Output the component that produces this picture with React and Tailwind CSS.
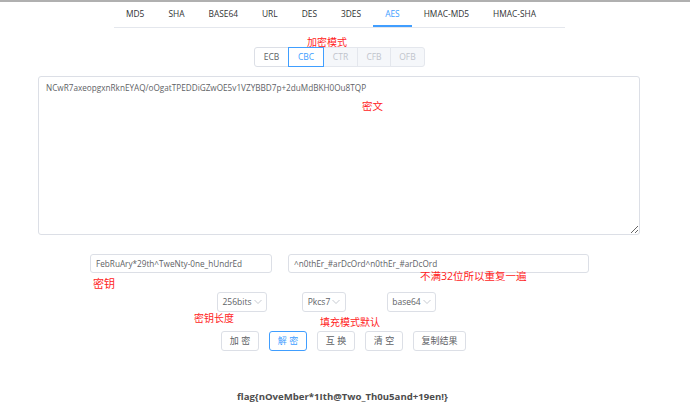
const TABS = ['MD5', 'SHA', 'BASE64', 'URL', 'DES', '3DES', 'AES', 'HMAC-MD5', 'HMAC-SHA']
const MODES = [
  { name: 'ECB', w: 'w-[35px]' },
  { name: 'CBC', w: 'w-[36px]', active: true },
  { name: 'CTR', w: 'w-[35px]', off: true },
  { name: 'CFB', w: 'w-[34px]', off: true },
  { name: 'OFB', w: 'w-[35px]', off: true },
]
const ACTIONS = ['加 密', '解 密', '互 换', '清 空', '复制结果']

function Chevron() {
  return (
    <svg width="8" height="6" viewBox="0 0 8 6" className="ml-[2px]">
      <polyline points="0.5,1 4,4.5 7.5,1" fill="none" stroke="#c0c4cc" strokeWidth="0.9" />
    </svg>
  )
}

function Select({ label, w, ml }) {
  return (
    <div className={`${w} ${ml} h-[20px] flex items-center justify-center rounded-[3px] border border-[#dcdfe6] text-[8.5px] text-[#606266]`}>
      {label}
      <Chevron />
    </div>
  )
}

function Note({ className, children }) {
  return (
    <span className={`absolute leading-none text-[#ff1c1c] whitespace-nowrap ${className}`}>{children}</span>
  )
}

export default function App() {
  return (
    <div className="relative w-[690px] h-[410px] overflow-hidden bg-white border-t-2 border-[#b0b0b0] font-['Open_Sans','Noto_Sans_CJK_SC',sans-serif] text-[#606266]">
      <div className="ml-[114px] w-[451px] h-[26px] flex border-b border-[#e4e7ed] text-[8.4px] text-[#303133]">
        {TABS.map((t) => (
          <div
            key={t}
            className={`px-3 h-full flex items-center ${t === 'AES' ? 'text-[#409eff] border-b-2 border-[#409eff] -mb-px pt-[2px]' : ''}`}
          >
            {t}
          </div>
        ))}
      </div>

      <div className="mt-[19px] ml-[254px] flex h-[20px] text-[8.5px]">
        {MODES.map((m, i) => (
          <div
            key={m.name}
            className={`${m.w} h-full flex items-center justify-center border ${i ? '-ml-px' : ''} ${
              i === 0 ? 'rounded-l-[3px]' : ''
            } ${i === MODES.length - 1 ? 'rounded-r-[3px]' : ''} ${
              m.active
                ? 'relative z-10 border-[#409eff] text-[#409eff] bg-white'
                : m.off
                  ? 'border-[#e4e7ed] bg-[#f5f7fa] text-[#c0c4cc]'
                  : 'border-[#dcdfe6] text-[#606266]'
            }`}
          >
            {m.name}
          </div>
        ))}
      </div>

      <textarea
        readOnly
        value="NCwR7axeopgxnRknEYAQ/oOgatTPEDDiGZwOE5v1VZYBBD7p+2duMdBKH0Ou8TQP"
        className="block mt-[9px] ml-[38px] w-[602px] h-[159px] rounded-[3px] border border-[#dcdfe6] pl-[7px] pt-[4px] text-[8.2px] leading-[13px] text-[#606266] outline-none"
      />

      <div className="mt-[19px] ml-[90px] flex gap-[16px]">
        <input
          readOnly
          value="FebRuAry*29th^TweNty-0ne_hUndrEd"
          className="w-[182px] h-[19px] rounded-[3px] border border-[#dcdfe6] px-[5px] text-[8.2px] text-[#606266] outline-none"
        />
        <input
          readOnly
          value="^n0thEr_#arDcOrd^n0thEr_#arDcOrd"
          className="w-[301px] h-[19px] rounded-[3px] border border-[#dcdfe6] px-[5px] text-[8.2px] text-[#606266] outline-none"
        />
      </div>

      <div className="mt-[19px] ml-[217px] flex">
        <Select label="256bits" w="w-[50px]" ml="" />
        <Select label="Pkcs7" w="w-[44px]" ml="ml-[35px]" />
        <Select label="base64" w="w-[49px]" ml="ml-[41px]" />
      </div>

      <div className="mt-[19px] ml-[221px] flex gap-[10px] text-[9px]">
        {ACTIONS.map((a, i) => (
          <div
            key={a}
            className={`${i === 4 ? 'w-[53px]' : 'w-[38px]'} h-[20px] flex items-center justify-center rounded-[3px] border ${
              i === 1 ? 'border-[#409eff] text-[#409eff]' : 'border-[#dcdfe6] text-[#606266]'
            }`}
          >
            {a}
          </div>
        ))}
      </div>

      <div className="mt-[31px] ml-[237px]">
        <span className="text-[9.6px] font-bold text-[#4d4d4d] leading-[14px]">
          flag{'{'}nOveMber*1Ith@Two_Th0u5and+19en!{'}'}
        </span>
      </div>

      <Note className="left-[307px] top-[35px] text-[10px]">加密模式</Note>
      <Note className="left-[362px] top-[99px] text-[10.5px]">密文</Note>
      <Note className="left-[93px] top-[276px] text-[11px]">密钥</Note>
      <Note className="left-[420px] top-[269px] text-[10.5px]">不满32位所以重复一遍</Note>
      <Note className="left-[194px] top-[311px] text-[10px]">密钥长度</Note>
      <Note className="left-[320px] top-[315px] text-[10px]">填充模式默认</Note>
    </div>
  )
}
